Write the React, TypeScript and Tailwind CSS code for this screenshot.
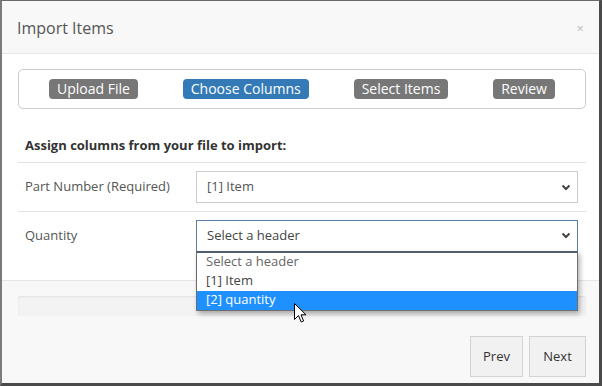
import React from 'react';

const steps = [
  { label: 'Upload File', active: false },
  { label: 'Choose Columns', active: true },
  { label: 'Select Items', active: false },
  { label: 'Review', active: false },
];

const options = ['Select a header', '[1] Item', '[2] quantity'];

function Chevron() {
  return (
    <svg width="10" height="7" viewBox="0 0 10 7" className="shrink-0">
      <polyline points="1.5,1.5 5,5 8.5,1.5" fill="none" stroke="#444" strokeWidth="2" />
    </svg>
  );
}

function Cursor() {
  return (
    <svg width="13" height="21" viewBox="0 0 13 21" className="absolute left-[97px] top-[50px]">
      <path
        d="M0.5,0.5 L0.5,16.5 L4.5,12.5 L7.2,19 L9.6,18 L7,11.8 L12,11.8 Z"
        fill="#fff"
        stroke="#000"
        strokeWidth="1"
        strokeLinejoin="round"
      />
    </svg>
  );
}

export default function App() {
  return (
    <div className="w-[602px] h-[386px] bg-[#4a4a4a] font-['Open_Sans',sans-serif]">
      <div className="w-full h-full flex flex-col bg-[#f8f8f8] border-l-2 border-l-[#7b7b7b] border-t border-t-[#6a6a6a] border-r-[3px] border-r-[#4a4a4a] border-b-[3px] border-b-[#4a4a4a]">
        {/* Header */}
        <div className="h-[53px] shrink-0 flex items-center justify-between pl-[15px] pr-[15px] pt-[2px] border-b border-[#e5e5e5] bg-[#f8f8f8]">
          <h4 className="text-[16px] text-[#555] leading-none">Import Items</h4>
          <span className="text-[13px] text-[#bbb] leading-none">×</span>
        </div>

        {/* Body */}
        <div className="bg-white pl-[16px] pr-[13px] pt-[15px] pb-[21px] border-b border-[#e5e5e5]">
          {/* Steps */}
          <div className="h-[40px] border border-[#ccc] rounded-[5px] flex items-center justify-between px-[30px]">
            {steps.map(step => (
              <span
                key={step.label}
                className={
                  step.active
                    ? 'h-[20px] flex items-center px-[8px] rounded-[4px] bg-[#337ab7] text-white text-[14px] leading-none'
                    : 'h-[20px] flex items-center px-[8px] rounded-[4px] bg-[#777] text-white text-[14px] leading-none'
                }
              >
                {step.label}
              </span>
            ))}
          </div>

          {/* Title */}
          <div className="mt-[20px] h-[34px] flex items-center px-[7px] border-b border-[#e3e3e3]">
            <span className="text-[13px] font-bold text-[#333]">Assign columns from your file to import:</span>
          </div>

          {/* Row 1 */}
          <div className="h-[49px] flex items-center border-b border-[#e3e3e3]">
            <span className="w-[178px] pl-[7px] text-[13px] text-[#555]">Part Number (Required)</span>
            <div className="flex-1 mr-[8px] h-[32px] border border-[#ccc] bg-white flex items-center justify-between pl-[10px] pr-[6px]">
              <span className="text-[13px] text-[#555]">[1] Item</span>
              <Chevron />
            </div>
          </div>

          {/* Row 2 */}
          <div className="h-[47px] flex items-center">
            <span className="w-[178px] pl-[7px] text-[13px] text-[#555]">Quantity</span>
            <div className="relative flex-1 mr-[8px]">
              <div className="h-[32px] border border-[#5b7ea3] bg-white flex items-center justify-between pl-[10px] pr-[6px]">
                <span className="text-[13px] text-[#444]">Select a header</span>
                <Chevron />
              </div>
              {/* Open dropdown list */}
              <div className="absolute left-0 right-0 top-[31px] z-10 bg-white border border-[#6d6d6d] border-t-2 border-t-[#4f5f70] shadow-[2px_3px_5px_rgba(0,0,0,0.3)]">
                {options.map((opt, i) => (
                  <div
                    key={opt}
                    className={
                      i === 2
                        ? 'h-[19px] flex items-center pl-[9px] text-[13px] bg-[#1e90ff] text-white'
                        : i === 0
                        ? 'h-[19px] flex items-center pl-[9px] text-[13px] text-[#666]'
                        : 'h-[19px] flex items-center pl-[9px] text-[13px] text-[#444]'
                    }
                  >
                    {opt}
                  </div>
                ))}
                <Cursor />
              </div>
            </div>
          </div>
        </div>

        {/* Footer */}
        <div className="flex-1 bg-[#f8f8f8] pl-[16px] pr-[13px] pt-[15px]">
          <div className="h-[20px] rounded-[3px] bg-[#f3f3f3] shadow-[inset_0_1px_2px_rgba(0,0,0,0.08)]" />
          <div className="mt-[20px] flex justify-end gap-[6px]">
            <button className="h-[41px] w-[53px] border border-[#d3d3d3] bg-[#f1f1f1] text-[13px] text-[#333]">
              Prev
            </button>
            <button className="h-[41px] w-[57px] border border-[#d3d3d3] bg-[#f1f1f1] text-[13px] text-[#333]">
              Next
            </button>
          </div>
        </div>
      </div>
    </div>
  );
}
